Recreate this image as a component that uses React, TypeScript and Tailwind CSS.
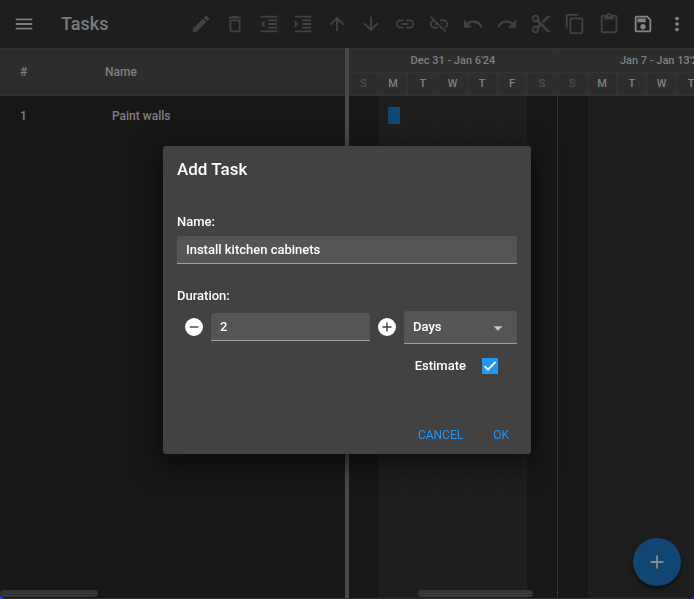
import { useState } from "react";
import type { ReactNode } from "react";
import type { IconType } from "react-icons";
import {
  MdAdd,
  MdArrowDownward,
  MdArrowDropDown,
  MdArrowUpward,
  MdContentCopy,
  MdContentCut,
  MdContentPaste,
  MdDeleteOutline,
  MdEdit,
  MdFormatIndentDecrease,
  MdFormatIndentIncrease,
  MdLink,
  MdLinkOff,
  MdMenu,
  MdMoreVert,
  MdOutlineSave,
  MdRedo,
  MdUndo,
} from "react-icons/md";

const tools: { label: string; icon: IconType; enabled?: boolean }[] = [
  { label: "Edit", icon: MdEdit },
  { label: "Delete", icon: MdDeleteOutline },
  { label: "Outdent", icon: MdFormatIndentDecrease },
  { label: "Indent", icon: MdFormatIndentIncrease },
  { label: "Move up", icon: MdArrowUpward },
  { label: "Move down", icon: MdArrowDownward },
  { label: "Link", icon: MdLink },
  { label: "Unlink", icon: MdLinkOff },
  { label: "Undo", icon: MdUndo },
  { label: "Redo", icon: MdRedo },
  { label: "Cut", icon: MdContentCut },
  { label: "Copy", icon: MdContentCopy },
  { label: "Paste", icon: MdContentPaste },
  { label: "Save", icon: MdOutlineSave, enabled: true },
  { label: "More", icon: MdMoreVert, enabled: true },
];

const days = ["S", "M", "T", "W", "T", "F", "S"];
const weeks = ["Dec 31 - Jan 6'24", "Jan 7 - Jan 13'24"];

function Toolbar() {
  return (
    <header className="flex h-12 items-center bg-[#1e1e1e] pl-[13px] text-[#7c7c7c]">
      <button aria-label="Menu">
        <MdMenu size={22} />
      </button>
      <h1 className="ml-[26px] text-lg font-medium">Tasks</h1>
      <div className="ml-auto flex">
        {tools.map(({ label, icon: Icon, enabled }) => (
          <button
            key={label}
            aria-label={label}
            className={`flex w-[34px] justify-center ${enabled ? "text-[#858585]" : "text-[#424242]"}`}
          >
            <Icon size={22} />
          </button>
        ))}
      </div>
    </header>
  );
}

function TaskTable() {
  return (
    <section className="flex basis-[calc(50%-2px)] shrink-0 flex-col bg-[#171717]">
      <table className="w-full table-fixed text-left text-xs font-medium text-[#808080]">
        <thead>
          <tr className="h-[47px] border-y border-[#333333] bg-[#2d2d2d]">
            <th className="w-[105px] pl-5 font-medium">#</th>
            <th className="font-medium">Name</th>
          </tr>
        </thead>
        <tbody>
          <tr className="h-10">
            <td className="pl-5">1</td>
            <td className="pl-[7px]">Paint walls</td>
          </tr>
        </tbody>
      </table>
      <div className="mt-auto mb-px h-[7px] w-[98px] rounded-full bg-[#353535]" />
    </section>
  );
}

function Week({ title, first }: { title: string; first: boolean }) {
  return (
    <div className="flex w-[209px] shrink-0 flex-col border-r border-[#333333]">
      <div className="flex h-6 items-center justify-center border-t border-[#333333] bg-[#2d2d2d] pt-0.5 text-[11px] font-medium text-[#808080]">
        {title}
      </div>
      <div className="grid flex-1 grid-cols-7">
        {days.map((day, i) => {
          const weekend = i === 0 || i === 6;
          return (
            <div key={i} className="flex flex-col">
              <div
                className={`flex h-6 items-center justify-center border-t border-b border-[#333333] bg-[#2d2d2d] text-[11px] font-medium ${i < 6 ? "border-r" : ""} ${weekend ? "text-[#4c4c4c]" : "text-[#808080]"}`}
              >
                {day}
              </div>
              <div
                className={`flex-1 pt-[11px] ${weekend ? "bg-[#171717]" : "border-r border-[#202020] bg-[#1e1e1e]"}`}
              >
                {first && i === 1 && (
                  <div className="ml-[9px] h-[17px] w-3 border border-[#144a78] bg-[#124672]" />
                )}
              </div>
            </div>
          );
        })}
      </div>
    </div>
  );
}

function Timeline() {
  return (
    <section className="relative flex min-w-0 flex-1 overflow-hidden bg-[#1e1e1e]">
      {weeks.map((title, i) => (
        <Week key={title} title={title} first={i === 0} />
      ))}
      <div className="absolute bottom-px left-[20%] h-[7px] w-1/3 rounded-full bg-[#383838]" />
    </section>
  );
}

function StepIcon({ plus = false }: { plus?: boolean }) {
  return (
    <svg viewBox="0 0 22 22" className="size-[22px]" fill="none" stroke="#424242" strokeWidth="1.4">
      <circle cx="11" cy="11" r="9" fill="white" stroke="none" />
      <path d={plus ? "M6.5 11h9M11 6.5v9" : "M6.8 11h8.4"} />
    </svg>
  );
}

function DialogButton({ children }: { children: ReactNode }) {
  return (
    <button type="button" className="px-2 text-xs font-normal text-[#2196f3]">
      {children}
    </button>
  );
}

function AddTaskDialog() {
  const [name, setName] = useState("Install kitchen cabinets");
  const [duration, setDuration] = useState(2);
  const [estimate, setEstimate] = useState(true);

  return (
    <div className="fixed inset-0 flex items-center justify-center">
      <form
        role="dialog"
        aria-labelledby="dialog-title"
        className="flex w-full max-w-[368px] flex-col rounded-[3px] bg-[#424242] px-3.5 pt-[11px] pb-[7px] text-[13px] font-medium text-white shadow-[0_8px_24px_4px_rgba(0,0,0,0.5)]"
      >
        <h2 id="dialog-title" className="text-[17px] leading-6">
          Add Task
        </h2>
        <label htmlFor="task-name" className="mt-[29px] leading-6">
          Name:
        </label>
        <input
          id="task-name"
          value={name}
          onChange={(e) => setName(e.target.value)}
          className="mt-0.5 h-7 w-full rounded-t-[3px] border-b border-[#a0a0a0] bg-[#555555] px-[9px] outline-none"
        />
        <label htmlFor="task-duration" className="mt-5 leading-6">
          Duration:
        </label>
        <div className="mt-[3px] flex items-center pl-1.5">
          <button type="button" aria-label="Decrease" onClick={() => setDuration(duration - 1)}>
            <StepIcon />
          </button>
          <input
            id="task-duration"
            value={duration}
            onChange={(e) => setDuration(Number(e.target.value))}
            className="ml-1.5 h-7 w-0 flex-1 rounded-t-[3px] border-b border-[#a0a0a0] bg-[#555555] px-[9px] outline-none"
          />
          <button
            type="button"
            aria-label="Increase"
            className="mx-1.5"
            onClick={() => setDuration(duration + 1)}
          >
            <StepIcon plus />
          </button>
          <div className="relative w-[113px]">
            <select
              aria-label="Duration unit"
              className="block h-[33px] w-full appearance-none rounded-t-[3px] border-b border-[#a0a0a0] bg-[#555555] px-[9px] outline-none"
            >
              <option>Days</option>
              <option>Hours</option>
            </select>
            <MdArrowDropDown
              size={22}
              className="pointer-events-none absolute top-1.5 right-2 text-[#c8c8c8]"
            />
          </div>
        </div>
        <label className="mt-3 mr-[19px] flex items-center gap-4 self-end leading-5">
          Estimate
          <span className="relative">
            <input
              type="checkbox"
              checked={estimate}
              onChange={(e) => setEstimate(e.target.checked)}
              className="peer block size-4 appearance-none border border-[#2196f3] checked:bg-[#2196f3]"
            />
            <svg
              viewBox="0 0 16 16"
              className="pointer-events-none invisible absolute inset-0 size-4 peer-checked:visible"
              fill="none"
              stroke="white"
              strokeWidth="1.8"
            >
              <path d="M2.5 8.2 6 11.7 13.5 3.8" />
            </svg>
          </span>
        </label>
        <div className="mt-[47px] flex h-6 justify-end gap-3.5">
          <DialogButton>CANCEL</DialogButton>
          <DialogButton>OK</DialogButton>
        </div>
      </form>
    </div>
  );
}

export default function App() {
  return (
    <div className="bg-linear-to-r from-[#2442e0] to-[#1a1a80] font-[Roboto,sans-serif]">
      <div className="flex min-h-screen flex-col overflow-hidden rounded-b-md border-b border-[#303030] bg-[#171717]">
        <Toolbar />
        <main className="flex flex-1">
          <TaskTable />
          <div className="w-1 shrink-0 bg-[#484848]" />
          <Timeline />
        </main>
        <button
          aria-label="Add task"
          className="fixed right-[13px] bottom-[13px] flex size-12 items-center justify-center rounded-full bg-[#124672] text-[#8a8a8a] shadow-md shadow-black/50"
        >
          <MdAdd size={22} />
        </button>
      </div>
      <AddTaskDialog />
    </div>
  );
}
